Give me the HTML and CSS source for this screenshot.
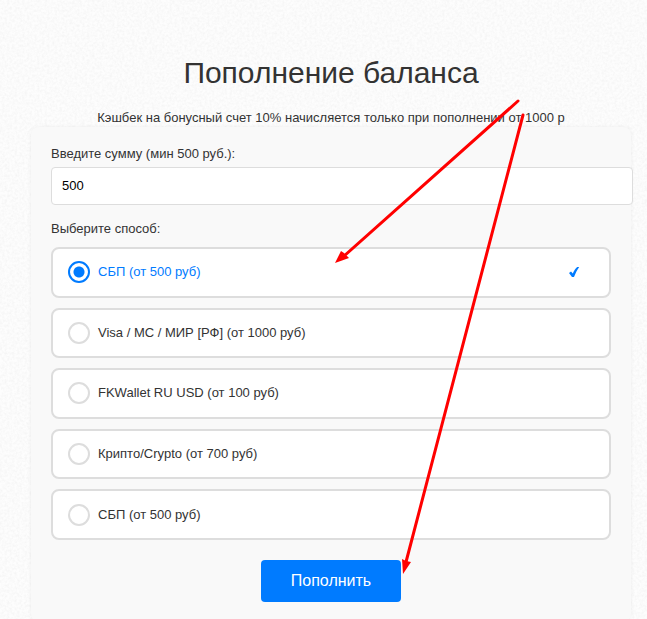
FILE: index.html
```html
<!DOCTYPE html>
<html lang="ru">
<head>
    <meta charset="UTF-8">
    <meta name="viewport" content="width=device-width, initial-scale=1.0">
    <title>Пополнение баланса</title>
    <link rel="stylesheet" href="styles.css">
</head>
<body>
    <!-- paper texture -->
    <svg class="texture" aria-hidden="true">
        <filter id="paper" x="0" y="0" width="100%" height="100%">
            <feTurbulence type="fractalNoise" baseFrequency="0.4" numOctaves="3" seed="4"/>
            <feColorMatrix values="0 0 0 0 0.6  0 0 0 0 0.6  0 0 0 0 0.6  0.3 0 0 0 -0.1"/>
        </filter>
        <rect width="100%" height="100%" filter="url(#paper)"/>
    </svg>

    <main class="container">
        <h1 class="title">Пополнение баланса</h1>
        <p class="notice">Кэшбек на бонусный счет 10% начисляется только при пополнении от 1000 р</p>

        <form class="pay-form">
            <label class="field-label" for="amount">Введите сумму (мин 500 руб.):</label>
            <input class="amount" id="amount" name="amount" type="text" inputmode="numeric" value="500">

            <fieldset class="methods">
                <legend class="methods-title">Выберите способ:</legend>
                <div class="method-list">
                    <label class="method">
                        <input class="method-radio" type="radio" name="method" value="sbp" checked>
                        <span class="method-name">СБП (от 500 руб)</span>
                        <svg class="method-check" viewBox="0 0 12 12" aria-hidden="true">
                            <path d="M1 7 L3 5.500 L4.800 7.600 C6 4.800 7.400 2.600 9.200 1 L11.200 1 C9.200 3.800 7.600 7 6 11 L4 11 Z"/>
                        </svg>
                    </label>
                    <label class="method">
                        <input class="method-radio" type="radio" name="method" value="card">
                        <span class="method-name">Visa / MC / МИР [РФ] (от 1000 руб)</span>
                    </label>
                    <label class="method">
                        <input class="method-radio" type="radio" name="method" value="fkwallet">
                        <span class="method-name">FKWallet RU USD (от 100 руб)</span>
                    </label>
                    <label class="method">
                        <input class="method-radio" type="radio" name="method" value="crypto">
                        <span class="method-name">Крипто/Crypto (от 700 руб)</span>
                    </label>
                    <label class="method">
                        <input class="method-radio" type="radio" name="method" value="sbp2">
                        <span class="method-name">СБП (от 500 руб)</span>
                    </label>
                </div>
            </fieldset>

            <button class="submit" type="submit">Пополнить</button>
        </form>
    </main>

    <!-- hint arrows over the form -->
    <svg class="arrows" width="647" height="619" viewBox="0 0 647 619" aria-hidden="true">
        <path class="arrow-line" d="M518 101 L344 256"/>
        <path class="arrow-head" d="M335 263 L341 251 L344 253 L349 258 Z"/>
        <path class="arrow-line" d="M523 115 L406 562"/>
        <path class="arrow-head" d="M403 574 L402 559 L406 561 L411 562 Z"/>
    </svg>
</body>
</html>
```
FILE: styles.css
```css
body {
    margin: 0;
    padding: 54px 16px 20px 31px;
    background: #fdfdfd;
    color: #333;
    font-family: Arial, "Liberation Sans", sans-serif;
    font-size: 13px;
    line-height: 18px;
}

.texture {
    position: absolute;
    top: 0;
    left: 0;
    width: 100%;
    height: 100%;
    z-index: -1;
}

.container {
    max-width: 600px;
    margin: 0 auto;
}

.title {
    margin: 0 0 18px;
    font-size: 30px;
    font-weight: normal;
    line-height: 37px;
    text-align: center;
}

.notice {
    position: relative;
    z-index: 1;
    margin: 0;
    text-align: center;
}

.pay-form {
    padding: 18px 20px 20px;
    background: #f9f9f9;
    border-radius: 8px;
    box-shadow: 0 0 4px rgba(0, 0, 0, 0.06);
}

.field-label {
    display: block;
    margin-bottom: 4px;
}

.amount {
    box-sizing: content-box;
    display: block;
    width: 100%;
    height: 16px;
    padding: 10px;
    border: 1px solid #ddd;
    border-radius: 4px;
    background: #fff;
    color: #000;
    font: 13px/16px Arial, "Liberation Sans", sans-serif;
}

.methods {
    min-width: 0;
    margin: 15px 0 20px;
    padding: 0;
    border: 0;
}

.methods-title {
    padding: 0 0 9px;
}

.method-list {
    display: grid;
    grid-auto-rows: 1fr;
    gap: 10px;
    min-height: 293px;
}

.method {
    display: flex;
    align-items: center;
    gap: 8px;
    padding: 0 29px 0 15px;
    background: #fff;
    border: 2px solid #ddd;
    border-radius: 8px;
    cursor: pointer;
}

.method-radio {
    appearance: none;
    box-sizing: border-box;
    flex: none;
    width: 22px;
    height: 22px;
    margin: 0;
    border: 2px solid #ddd;
    border-radius: 50%;
    background: #fff;
}

.method-radio:checked {
    border-color: #007bff;
    background: radial-gradient(circle, #007bff 5px, #fff 6px);
}

.method-radio:checked + .method-name {
    color: #007bff;
}

.method-name {
    flex: 1;
}

.method-check {
    width: 12px;
    height: 12px;
    fill: #007bff;
}

.submit {
    display: block;
    margin: 0 auto;
    padding: 12px 30px;
    background: #007bff;
    border: 0;
    border-radius: 4px;
    color: #fff;
    font: 16px/18px Arial, "Liberation Sans", sans-serif;
    cursor: pointer;
}

.arrows {
    position: absolute;
    top: 0;
    left: 0;
    z-index: 2;
    pointer-events: none;
}

.arrow-line {
    stroke: #f00;
    stroke-width: 3;
    stroke-linecap: round;
    fill: none;
}

.arrow-head {
    fill: #f00;
}
```
